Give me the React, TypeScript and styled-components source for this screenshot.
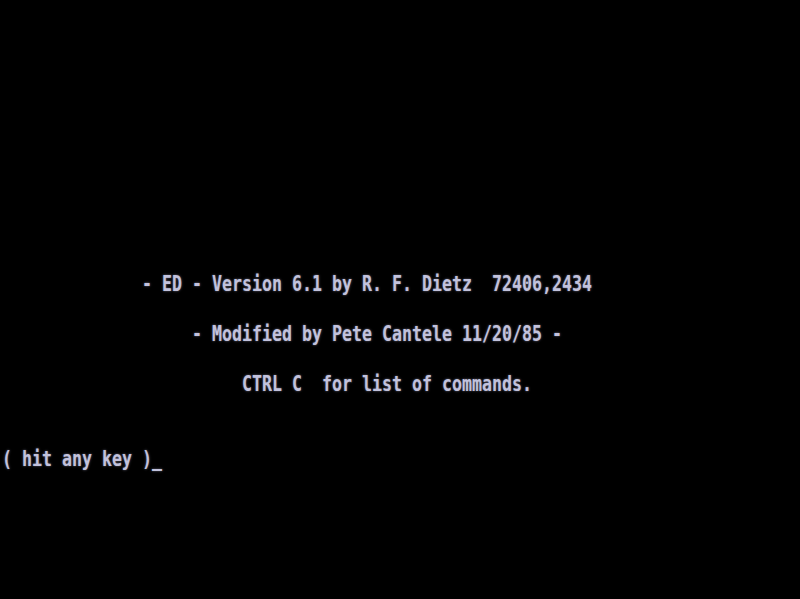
import React from "react";
import styled, { createGlobalStyle } from "styled-components";

const Global = createGlobalStyle`
  html, body {
    margin: 0;
    padding: 0;
    background: #000;
    overflow: hidden;
  }
`;

const Screen = styled.div`
  width: 800px;
  height: 599px;
  background: #000;
  display: flex;
  flex-direction: column;
  overflow: hidden;
`;

const Row = styled.div`
  height: 25px;
  flex: 0 0 25px;
  padding-left: 2px;
  white-space: pre;
  font-family: "DejaVu Sans Mono", "Liberation Mono", monospace;
  font-size: 16.61px;
  line-height: 25px;
  font-weight: bold;
  color: #c2c2dc;
  text-shadow: 0 0 2px rgba(190, 190, 230, 0.55);
  transform: scaleY(1.32);
  transform-origin: 0 25.3px;
`;

const rows: string[] = Array(24).fill("");
const put = (r: number, c: number, s: string) => {
  rows[r] = " ".repeat(c) + s;
};
put(11, 14, "- ED - Version 6.1 by R. F. Dietz  72406,2434");
put(13, 19, "- Modified by Pete Cantele 11/20/85 -");
put(15, 24, "CTRL C  for list of commands.");
put(18, 0, "( hit any key )_");

export default function App() {
  return (
    <>
      <Global />
      <Screen>
        {rows.map((t, i) => (
          <Row key={i}>{t || " "}</Row>
        ))}
      </Screen>
    </>
  );
}
